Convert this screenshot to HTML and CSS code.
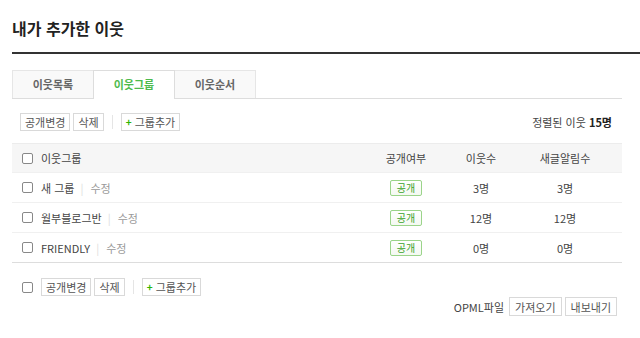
FILE: index.html
```html
<!DOCTYPE html>
<html lang="ko">
<head>
  <meta charset="UTF-8" />
  <title>내가 추가한 이웃</title>
  <link rel="stylesheet" href="styles.css">
</head>
<body>

  <div class="page">
    <h2 class="title">내가 추가한 이웃</h2>

    <div class="tabs">
      <a class="tab">이웃목록</a>
      <a class="tab on">이웃그룹</a>
      <a class="tab">이웃순서</a>
    </div>

    <div class="toolbar">
      <div class="btns">
        <button class="btn">공개변경</button>
        <button class="btn">삭제</button>
        <span class="sep"></span>
        <button class="btn"><span class="plus">+</span>그룹추가</button>
      </div>
      <div class="count">정렬된 이웃 <b>15명</b></div>
    </div>

    <div class="table">
      <div class="row head">
        <div class="name"><span class="chk"></span>이웃그룹</div>
        <div class="cell">공개여부</div>
        <div class="cell">이웃수</div>
        <div class="cell">새글알림수</div>
      </div>
      <div class="row">
        <div class="name"><span class="chk"></span>새 그룹<span class="bar">|</span><a class="edit">수정</a></div>
        <div class="cell"><span class="badge">공개</span></div>
        <div class="cell">3명</div>
        <div class="cell">3명</div>
      </div>
      <div class="row">
        <div class="name"><span class="chk"></span>월부블로그반<span class="bar">|</span><a class="edit">수정</a></div>
        <div class="cell"><span class="badge">공개</span></div>
        <div class="cell">12명</div>
        <div class="cell">12명</div>
      </div>
      <div class="row last">
        <div class="name"><span class="chk"></span>FRIENDLY<span class="bar">|</span><a class="edit">수정</a></div>
        <div class="cell"><span class="badge">공개</span></div>
        <div class="cell">0명</div>
        <div class="cell">0명</div>
      </div>
    </div>

    <div class="footer">
      <span class="chk"></span>
      <button class="btn">공개변경</button>
      <button class="btn">삭제</button>
      <span class="sep"></span>
      <button class="btn"><span class="plus">+</span>그룹추가</button>
    </div>

    <div class="opml">
      <span class="label">OPML파일</span>
      <button class="btn">가져오기</button>
      <button class="btn">내보내기</button>
    </div>
  </div>

</body>
</html>
```

FILE: styles.css
```css
body {
  margin: 0;
  font-family: "Noto Sans CJK KR", "Noto Sans", sans-serif;
  font-size: 11px;
  color: #333;
  background: #fff;
}
.page {
  padding-left: 12px;
}
.title {
  margin: 0;
  font-size: 16px;
  font-weight: bold;
  color: #222;
  border-bottom: 2px solid #333;
  box-sizing: border-box;
  height: 54px;
  line-height: 56px;
}
.tabs {
  display: flex;
  margin-top: 16px;
  width: 610px;
  height: 29px;
  border-bottom: 1px solid #ddd;
  box-sizing: border-box;
}
.tab {
  width: 82px;
  height: 28px;
  line-height: 27px;
  text-align: center;
  font-weight: bold;
  color: #666;
  background: #f9f9f9;
  border: 1px solid #e6e6e6;
  border-bottom: none;
  box-sizing: border-box;
  margin-right: -1px;
}
.tab.on {
  background: #fff;
  color: #4dbb4d;
  height: 29px;
  border-color: #ddd;
  position: relative;
  z-index: 1;
}
.toolbar {
  width: 610px;
  display: flex;
  justify-content: space-between;
  align-items: center;
  padding: 0 0 0 8px;
  box-sizing: border-box;
  margin-top: 14px;
  height: 18px;
}
.btns, .footer, .opml {
  display: flex;
  align-items: center;
}
.btn {
  font-family: inherit;
  font-size: 11px;
  color: #555;
  background: #fff;
  border: 1px solid #d9d9d9;
  height: 18px;
  padding: 0 4px;
  margin-right: 3px;
  line-height: 16px;
  cursor: pointer;
  display: inline-flex;
  align-items: center;
}
.plus {
  color: #2db400;
  font-weight: bold;
  margin-right: 3px;
  font-size: 10px;
}
.sep {
  width: 1px;
  height: 14px;
  background: #e5e5e5;
  margin: 0 8px 0 5px;
}
.count {
  color: #444;
  padding-right: 10px;
}
.count b {
  color: #222;
}
.table {
  width: 610px;
  margin-top: 12px;
  border-top: 1px solid #ececec;
  border-bottom: 1px solid #ddd;
}
.row {
  display: grid;
  grid-template-columns: 1fr 72px 78px 90px 12px;
  height: 30px;
  box-sizing: border-box;
  align-items: center;
  border-top: 1px solid #f0f0f0;
  color: #444;
}
.row.head {
  border-top: none;
  height: 28px;
  background: #f6f6f6;
}
.name {
  display: flex;
  align-items: center;
  padding-left: 10px;
}
.cell {
  text-align: center;
}
.chk {
  display: inline-block;
  width: 9px;
  height: 9px;
  border: 1px solid #888;
  border-radius: 2px;
  margin-right: 8px;
  background: #fff;
}
.bar {
  color: #ddd;
  margin: 0 7px 0 6px;
}
.edit {
  color: #999;
}
.badge {
  display: inline-block;
  width: 30px;
  height: 14px;
  line-height: 14px;
  border: 1px solid #9bd48a;
  border-radius: 2px;
  color: #3aa22a;
  background: linear-gradient(#fff, #f4f9f2);
  font-size: 10px;
}
.footer {
  margin-top: 15px;
  padding-left: 10px;
  height: 18px;
}
.footer .chk {
  margin-right: 8px;
}
.opml {
  width: 610px;
  justify-content: flex-end;
  margin-top: 1px;
  height: 19px;
  padding-right: 2px;
  box-sizing: border-box;
}
.opml .label {
  color: #444;
  margin-right: 5px;
}
.opml .btn {
  height: 19px;
  padding: 0 5px;
}
```
